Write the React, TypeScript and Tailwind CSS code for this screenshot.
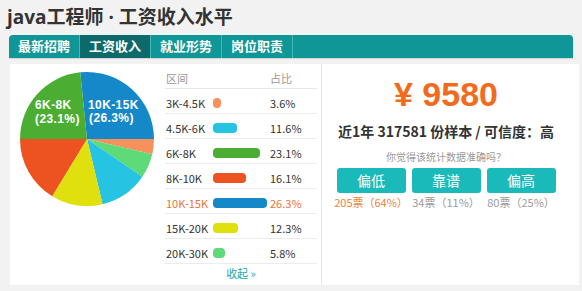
import React from "react";

const slices = [
  { label: "10K-15K", pct: 26.3, color: "#1588c9" },
  { label: "3K-4.5K", pct: 3.6, color: "#f6915c" },
  { label: "20K-30K", pct: 5.8, color: "#5edb78" },
  { label: "4.5K-6K", pct: 11.6, color: "#27c3e3" },
  { label: "15K-20K", pct: 12.3, color: "#dfe00e" },
  { label: "8K-10K", pct: 16.1, color: "#ec5320" },
  { label: "6K-8K", pct: 23.1, color: "#4bae33" },
];

const rows = [
  { range: "3K-4.5K", pct: 3.6, color: "#f6915c" },
  { range: "4.5K-6K", pct: 11.6, color: "#27c3e3" },
  { range: "6K-8K", pct: 23.1, color: "#4bae33" },
  { range: "8K-10K", pct: 16.1, color: "#ec5320" },
  { range: "10K-15K", pct: 26.3, color: "#1588c9", active: true },
  { range: "15K-20K", pct: 12.3, color: "#dfe00e" },
  { range: "20K-30K", pct: 5.8, color: "#5edb78" },
];

const tabs = ["最新招聘", "工资收入", "就业形势", "岗位职责"];

function Pie() {
  const cx = 77;
  const cy = 75;
  const r = 67;
  const total = slices.reduce((s, x) => s + x.pct, 0);
  let a = -5.8;
  const pt = (deg: number) => {
    const rad = (deg * Math.PI) / 180;
    return [cx + r * Math.sin(rad), cy - r * Math.cos(rad)];
  };
  return (
    <svg width="155" height="221" className="block">
      {slices.map((s) => {
        const sweep = (s.pct / total) * 360;
        const [x1, y1] = pt(a);
        const [x2, y2] = pt(a + sweep);
        a += sweep;
        return (
          <path
            key={s.label}
            d={`M${cx},${cy} L${x1},${y1} A${r},${r} 0 ${sweep > 180 ? 1 : 0} 1 ${x2},${y2} Z`}
            fill={s.color}
          />
        );
      })}
      <g fill="#fff" fontFamily="'Liberation Sans', Arial, sans-serif" fontWeight="bold" fontSize="12" letterSpacing="0.4">
        <text x="25" y="45">6K-8K</text>
        <text x="25" y="59">(23.1%)</text>
        <text x="78" y="45">10K-15K</text>
        <text x="79" y="58">(26.3%)</text>
      </g>
    </svg>
  );
}

export default function App() {
  return (
    <div className="w-[582px] h-[291px] overflow-hidden bg-[#f2f2f2] text-[#333] font-['Open_Sans','Noto_Sans_CJK_SC',sans-serif]">
      <h1 className="px-[7px] pt-[3px] text-[19px] leading-[28px] font-bold">
        java工程师 · 工资收入水平
      </h1>

      <div className="mx-[9px] mt-[4px] h-[23px] rounded-t-[4px] bg-[#0f9696] flex shadow-[0_1px_1px_rgba(0,0,0,0.12)]">
        {tabs.map((t, i) => (
          <div
            key={t}
            className={`w-[71px] flex items-center justify-center text-[13px] font-bold text-white border-r border-[#4cb6b6] ${
              i === 0 ? "rounded-tl-[4px]" : ""
            } ${i === 1 ? "bg-[#0c6a6a]" : ""}`}
          >
            {t}
          </div>
        ))}
      </div>

      <div className="mt-[6px] ml-[10px] flex h-[221px]">
        <div className="w-[312px] bg-white flex border-r border-[#e6e6e6]">
          <div className="w-[155px]">
            <Pie />
          </div>
          <div className="w-[152px] text-[11px] font-['Noto_Sans_CJK_SC',sans-serif]">
            <div className="h-[25px] pt-[5px] flex items-center border-b border-[#e8e8e8] text-[#999]">
              <span className="pl-[1px] w-[105px]">区间</span>
              <span>占比</span>
            </div>
            {rows.map((r) => (
              <div
                key={r.range}
                className={`h-[25px] pt-[4px] flex items-center border-b border-[#ececec] ${
                  r.active ? "text-[#e8733a]" : "text-[#333]"
                }`}
              >
                <span className="pl-[1px] w-[48px]">{r.range}</span>
                <span className="w-[57px]">
                  <span
                    className="block h-[10px] rounded-[4px]"
                    style={{ width: Math.max(8, r.pct * 2.05), background: r.color }}
                  />
                </span>
                <span>{r.pct}%</span>
              </div>
            ))}
            <div className="h-[18px] flex items-center justify-center text-[#2aa3a8] text-[11px]">
              收起 »
            </div>
          </div>
        </div>

        <div className="w-[257px] bg-white font-['Noto_Sans_CJK_SC',sans-serif]">
          <div className="ml-[14px] w-[220px] flex flex-col items-center">
            <div className="mt-[10px] h-[40px] flex items-center text-[34px] font-bold text-[#f26b1d] font-['Liberation_Sans',sans-serif]">
              ¥ 9580
            </div>
            <div className="mt-[7px] text-[14px] leading-[20px] font-bold text-[#333]">
              近1年 317581 份样本 / 可信度：高
            </div>
            <div className="mt-[9px] text-[10px] leading-[14px] text-[#999]">
              你觉得该统计数据准确吗？
            </div>
            <div className="mt-[4px] flex gap-[6px]">
              {[
                { t: "偏低", v: "205票（64%）", c: "text-[#e8843a]" },
                { t: "靠谱", v: "34票（11%）", c: "text-[#9a9a9a]" },
                { t: "偏高", v: "80票（25%）", c: "text-[#9a9a9a]" },
              ].map((b) => (
                <div key={b.t} className="w-[69px] flex flex-col items-center">
                  <div className="w-full h-[25px] rounded-[3px] bg-[#1bbaba] text-white text-[14px] flex items-center justify-center">
                    {b.t}
                  </div>
                  <div className={`mt-[2px] text-[11px] leading-[14px] whitespace-nowrap ${b.c}`}>
                    {b.v}
                  </div>
                </div>
              ))}
            </div>
          </div>
        </div>
      </div>
    </div>
  );
}
